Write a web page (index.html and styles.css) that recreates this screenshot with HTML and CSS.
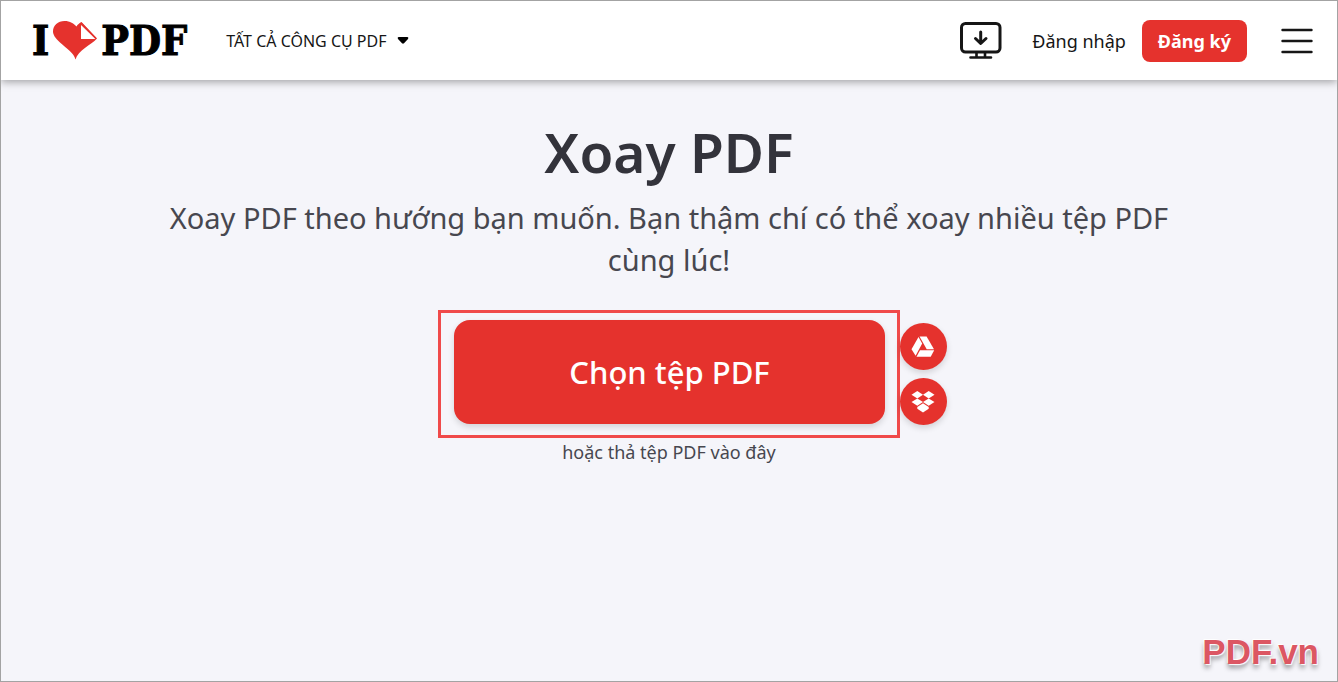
FILE: index.html
```
<!DOCTYPE html>
<html lang="vi">
<head>
    <meta charset="UTF-8">
    <meta name="viewport" content="width=device-width, initial-scale=1.0">
    <title>Xoay PDF</title>
    <link rel="stylesheet" href="styles.css">
</head>
<body>
<header class="header">
    <a class="logo" href="#" aria-label="I love PDF">
        <span>I</span>
        <svg class="heart" viewBox="0 0 44 39" aria-hidden="true">
            <path fill="#e5322d" d="M22.500 38.500C21 32 14 28 7 21.500C2 17 0 13.500 0 10.500C0 4.500 5 0 11.500 0C17 0 21 2.500 23.500 5.500C24.500 3.500 26.500 2 28.500 1L44 17.500C38 24 25 29 22.500 38.500Z"/>
            <path fill="#fff" d="M28 4V18H42.500Z"/>
            <path fill="none" stroke="#e5322d" stroke-width="1.300" d="M28 2L43 17.500"/>
        </svg>
        <span>PDF</span>
    </a>
    <nav class="nav">
        <button class="tools" type="button">TẤT CẢ CÔNG CỤ PDF
            <svg width="12" height="7" viewBox="0 0 12 7" aria-hidden="true"><path d="M1.500 0H10.500Q12 .5 11 2L7 6.300Q6 7 5 6.300L1 2Q0 .5 1.500 0Z"/></svg>
        </button>
    </nav>
    <div class="actions">
        <a class="desktop" href="#" aria-label="Desktop">
            <svg width="42" height="38" viewBox="0 0 42 38" fill="none" stroke="#161616" stroke-width="3" stroke-linecap="round" stroke-linejoin="round" aria-hidden="true">
                <rect x="1.500" y="1.500" width="38.500" height="28.500" rx="4"/>
                <path d="M20.700 10V21M15.500 16.500L20.700 21.500L26 16.500"/>
                <path d="M16.500 31V35M25 31V35M10.500 35.500H31" stroke-width="2.600"/>
            </svg>
        </a>
        <a class="login" href="#">Đăng nhập</a>
        <a class="signup" href="#">Đăng ký</a>
        <button class="menu" type="button" aria-label="Menu">
            <svg width="32" height="26" viewBox="0 0 32 26" stroke="#161616" stroke-width="2.400" stroke-linecap="round" aria-hidden="true">
                <path d="M1.500 2H30.500M1.500 13H30.500M1.500 24H30.500"/>
            </svg>
        </button>
    </div>
</header>

<main class="main">
    <h1>Xoay PDF</h1>
    <h2>Xoay PDF theo hướng bạn muốn. Bạn thậm chí có thể xoay nhiều tệp PDF cùng lúc!</h2>
    <div class="uploader">
        <div class="outline">
            <button class="pick" type="button">Chọn tệp PDF</button>
        </div>
        <div class="clouds">
            <button class="cloud" type="button" aria-label="Google Drive">
                <svg width="24" height="22" viewBox="0 0 24 22" fill="#fff" aria-hidden="true">
                    <path d="M7.500 1L11.200 7.600L4.600 19.800L.5 13.300Z"/>
                    <path d="M8.500 .5H15.600L23 13.200H15.700Z"/>
                    <path d="M9 14.300H23.200L19.700 20.800H5.500Z"/>
                </svg>
            </button>
            <button class="cloud" type="button" aria-label="Dropbox">
                <svg width="24" height="22" viewBox="0 0 24 22" fill="#fff" aria-hidden="true">
                    <path d="M6.300 0L12 3.700L6.300 7.400L.5 3.700Z"/>
                    <path d="M17.700 0L23.500 3.700L17.700 7.400L12 3.700Z"/>
                    <path d="M6.300 7.400L12 11.100L6.300 14.800L.5 11.100Z"/>
                    <path d="M17.700 7.400L23.500 11.100L17.700 14.800L12 11.100Z"/>
                    <path d="M12 12.300L17.700 16V17.800L12 21.500L6.300 17.800V16Z"/>
                </svg>
            </button>
        </div>
    </div>
    <p class="drop">hoặc thả tệp PDF vào đây</p>
</main>

<footer class="brand">PDF.vn</footer>
</body>
</html>
```
FILE: styles.css
```
* {
    box-sizing: border-box;
}

body {
    margin: 0;
    min-height: 100vh;
    display: flex;
    flex-direction: column;
    border: 1px solid #a3a3a3;
    background-color: #f5f5fa;
    color: #161616;
    font-family: "Noto Sans", "Open Sans", sans-serif;
}

a {
    color: inherit;
    text-decoration: none;
}

button {
    padding: 0;
    border: 0;
    background: none;
    color: inherit;
    font: inherit;
    cursor: pointer;
}

svg {
    display: block;
}

.header {
    display: flex;
    align-items: center;
    height: 79px;
    padding: 0 24px 0 31px;
    background-color: #fff;
    box-shadow: 0 2px 8px rgba(0, 0, 0, 0.35);
}

.logo {
    display: flex;
    align-items: center;
    gap: 4px;
    color: #000;
    font-family: "DejaVu Serif Condensed", "DejaVu Serif", serif;
    font-size: 41px;
    font-weight: bold;
    line-height: 48px;
    -webkit-text-stroke: 1px #000;
}

.heart {
    width: 44px;
    height: 39px;
}

.nav {
    margin-left: 39px;
}

.tools {
    display: flex;
    align-items: center;
    gap: 10px;
    font-size: 16px;
}

.actions {
    display: flex;
    align-items: center;
    margin-left: auto;
    font-size: 18px;
}

.login {
    margin: 0 16px 0 30px;
}

.signup {
    padding: 0 16px;
    border-radius: 8px;
    background-color: #e5322d;
    color: #fff;
    font-weight: bold;
    line-height: 42px;
}

.menu {
    margin-left: 34px;
}

.main {
    flex: 1;
    padding: 34px 20px;
    text-align: center;
}

h1 {
    margin: 0;
    color: #33333b;
    font-size: 55px;
    font-weight: 600;
    line-height: 76px;
}

h2 {
    max-width: 1040px;
    margin: 7px auto 29px;
    color: #47474f;
    font-size: 29px;
    font-weight: normal;
    line-height: 42px;
}

.uploader {
    display: grid;
    grid-template-columns: 1fr auto 1fr;
    align-items: center;
}

.outline {
    grid-column: 2;
    padding: 7px 12px 11px 13px;
    border: 3px solid #f04a4a;
}

.pick {
    display: block;
    padding: 30px 115px;
    border-radius: 16px;
    background-color: #e5322d;
    box-shadow: 0 3px 6px rgba(0, 0, 0, 0.14);
    color: #fff;
    font-size: 31px;
    font-weight: 500;
    line-height: 44px;
}

.clouds {
    display: flex;
    flex-direction: column;
    gap: 8px;
}

.cloud {
    display: flex;
    align-items: center;
    justify-content: center;
    width: 47px;
    height: 47px;
    border-radius: 50%;
    background-color: #e5322d;
    box-shadow: 0 3px 6px rgba(0, 0, 0, 0.14);
}

.drop {
    margin: 2px 0 0;
    color: #47474f;
    font-size: 18px;
    line-height: 25px;
}

.brand {
    padding: 0 18px 9px;
    color: #dc5763;
    font-family: "Liberation Sans", Arial, sans-serif;
    font-size: 35px;
    font-weight: bold;
    line-height: 40px;
    text-align: right;
    text-shadow: 1px 1px 1px #fff, -1px -1px 1px #fff, 0 4px 5px rgba(0, 0, 0, 0.4);
}
```
